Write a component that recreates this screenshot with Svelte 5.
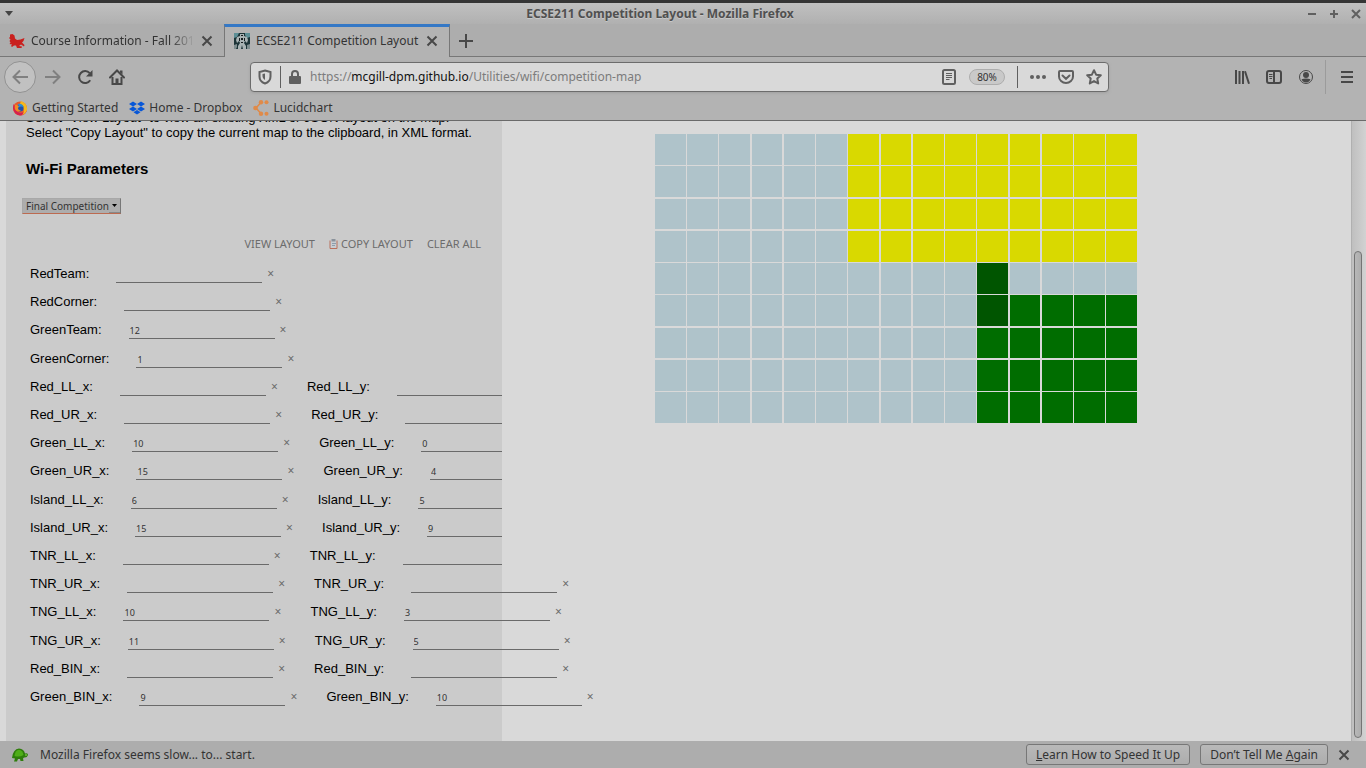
<script>
  const singles = [
    ['RedTeam', ''],
    ['RedCorner', ''],
    ['GreenTeam', '12'],
    ['GreenCorner', '1']
  ];
  const pairs = [
    ['Red_LL', '', ''],
    ['Red_UR', '', ''],
    ['Green_LL', '10', '0'],
    ['Green_UR', '15', '4'],
    ['Island_LL', '6', '5'],
    ['Island_UR', '15', '9'],
    ['TNR_LL', '', ''],
    ['TNR_UR', '', ''],
    ['TNG_LL', '10', '3'],
    ['TNG_UR', '11', '5'],
    ['Red_BIN', '', ''],
    ['Green_BIN', '9', '10']
  ];
  const rows = $state([
    ...singles.map(([name, value]) => ({ clip: true, fields: [{ name, value }] })),
    ...pairs.map(([name, x, y], i) => ({
      clip: i < 7,
      fields: [
        { name: name + '_x', value: x },
        { name: name + '_y', value: y }
      ]
    }))
  ]);

  function kind(col, row) {
    if (col >= 6 && row < 4) return 'island';
    if (col === 10 && (row === 4 || row === 5)) return 'tunnel';
    if (col >= 10 && row >= 5) return 'green';
    return 'water';
  }
  const cells = Array.from({ length: 135 }, (_, i) => kind(i % 15, Math.floor(i / 15)));

  function clearAll() {
    for (const row of rows) for (const field of row.fields) field.value = '';
  }
</script>

<div class="window">
  <header class="titlebar">
    <button class="wm" aria-label="Window menu"><svg width="8" height="5"><path d="M0 0h8L4 5z" fill="#444" stroke="none" /></svg></button>
    <h1>ECSE211 Competition Layout - Mozilla Firefox</h1>
    <div class="wmgroup">
      <button class="wm" aria-label="Minimise"><svg width="10" height="10"><path d="M1 5h8" /></svg></button>
      <button class="wm" aria-label="Maximise"><svg width="10" height="10"><path d="M1 5h8M5 1v8" /></svg></button>
      <button class="wm" aria-label="Close window"><svg width="10" height="10"><path d="M1 1l8 8M9 1l-8 8" /></svg></button>
    </div>
  </header>

  <nav class="tabs" aria-label="Tabs">
    <div class="tab first">
      <svg width="16" height="16" viewBox="0 0 16 16"><path fill="#c9201e" d="M1 1.500L3.500 1l2 1.500.5 3L8 7l3.500-.5L15.500 5l-1 3-1.500 1.500 2.500 2.500-.5 1.500-3-2-2 1.500 3 .5-.5 1.500H8L7 12.500H5L3 14l-1-1 1-1.500L.5 11l1-1.500L.5 8l1-1.500L0 5l1-1z" /></svg>
      <span class="label fade">Course Information - Fall 2019</span>
      <button class="close" aria-label="Close tab"><svg width="12" height="12"><path d="M1.500 1.500l9 9M10.500 1.500l-9 9" /></svg></button>
    </div>
    <div class="tab active">
      <svg width="16" height="16" viewBox="0 0 16 16"><path fill="#1d3438" d="M0 0h16v16H0z" /><path fill="#5d8f96" d="M0 0h5L3 4 0 5zM11 0h5v4l-3 1-2-3z" /><path fill="#7f8e90" d="M0 12l3-1v3l-1 2H0zM16 11l-3 1v4h3z" /><path fill="#a9b3b4" d="M6 1h4v2l3 1 1 3-1 3-2-2-1 2 2 3v3h-3l-1-4-1 4H4v-3l2-3-1-2-2 2-1-3 1-3 3-1z" /><path fill="#161d1f" d="M7 2h2v1H7zM5 5h1v3H5zM10 5h1v3h-1zM7 5h2v2H7zM7 9h2v1H7z" /></svg>
      <span class="label">ECSE211 Competition Layout</span>
      <button class="close" aria-label="Close tab"><svg width="12" height="12"><path d="M1.500 1.500l9 9M10.500 1.500l-9 9" /></svg></button>
    </div>
    <button class="newtab" aria-label="New tab"><svg width="14" height="14"><path d="M7 0v14M0 7h14" /></svg></button>
  </nav>

  <div class="toolbar">
    <button class="tool back" aria-label="Back"><svg width="16" height="16"><path d="M1 8h15M8 1.500L1.500 8 8 14.500" /></svg></button>
    <button class="tool dim" aria-label="Forward"><svg width="16" height="16"><path d="M0 8h15M8 1.500L14.500 8 8 14.500" /></svg></button>
    <button class="tool" aria-label="Reload"><svg width="16" height="16"><path d="M13.200 11.300A6 6 0 1 1 12.700 4.200" /><path class="solid" d="M15.500 1v6.500H9z" /></svg></button>
    <button class="tool" aria-label="Home"><svg width="16" height="16"><path d="M1 8.500L8 1.500l7 7" stroke-linecap="round" /><path d="M3.500 8v7h9V8" /><path class="solid" d="M6.500 9.500h3V15h-3zM11 1.500h2.500v4L11 3.500z" /></svg></button>
    <span class="spring"></span>
    <div class="urlbar">
      <svg width="16" height="16"><path d="M8 1.500l5.500 1.500v4.500c0 3.500-2.500 6-5.500 7-3-1-5.500-3.500-5.500-7V3z" /><path d="M8 4.500v6.500C6.500 10 5.500 8.700 5.500 7V5z" class="solid" /></svg>
      <span class="rule"></span>
      <svg width="14" height="16"><path class="solid" d="M2 7h10a1 1 0 0 1 1 1v6a1 1 0 0 1-1 1H2a1 1 0 0 1-1-1V8a1 1 0 0 1 1-1z" /><path d="M4 7.500V5a3 3 0 0 1 6 0v2.500" /></svg>
      <div class="url" role="textbox" tabindex="0" aria-label="Address" contenteditable="true" spellcheck="false">https://<b>mcgill-dpm.github.io</b>/Utilities/wifi/competition-map</div>
      <button class="in" aria-label="Reader view"><svg width="16" height="16"><rect x="2" y="1" width="12" height="14" rx="1.500" /><path class="thin" d="M5 4.500h6M5 6.500h6M5 8.500h6M5 10.500h3.500" /></svg></button>
      <button class="zoom">80%</button>
      <span class="rule"></span>
      <button class="in" aria-label="Page actions"><svg width="16" height="16"><circle class="solid" cx="2" cy="8" r="2" /><circle class="solid" cx="8" cy="8" r="2" /><circle class="solid" cx="14" cy="8" r="2" /></svg></button>
      <button class="in" aria-label="Save to Pocket"><svg width="16" height="16"><path d="M2 2h12q1 0 1 1v4.500a7 6.500 0 0 1-14 0V3q0-1 1-1z" /><path d="M4.500 6.500L8 9.800l3.500-3.300" stroke-linecap="round" /></svg></button>
      <button class="in" aria-label="Bookmark"><svg width="16" height="16"><path d="M8 1.200l2.100 4.500 4.700.6-3.500 3.300.9 4.900L8 12.100l-4.200 2.400.9-4.900L1.200 6.300l4.700-.6z" stroke-linejoin="round" /></svg></button>
    </div>
    <span class="spring"></span>
    <button class="tool" aria-label="Library"><svg width="16" height="16"><path d="M2 1v14M5.500 2v13M9 2v13M11 2.200l4 12.600" /></svg></button>
    <button class="tool" aria-label="Sidebars"><svg width="16" height="16"><rect x="1" y="2" width="14" height="12" rx="2" /><path d="M8 2v12" /><path class="thin" d="M3 5.500h3.500M3 7.500h3.500M3.500 9.500H6" /></svg></button>
    <button class="tool" aria-label="Account"><svg width="16" height="16"><circle class="thin" cx="8" cy="8" r="6.500" /><circle class="solid" cx="8" cy="6" r="3" /><path class="solid" d="M3.500 10.200Q8 8.800 12.500 10.200 11 13.500 8 13.500T3.500 10.200z" /></svg></button>
    <span class="sep"></span>
    <button class="tool" aria-label="Menu"><svg width="16" height="16"><path d="M2 3h12M2 8h12M2 13h12" /></svg></button>
  </div>

  <nav class="bookmarks" aria-label="Bookmarks">
    <a href="#start"><svg width="16" height="16" viewBox="0 0 16 16"><circle cx="8" cy="8.500" r="7" fill="#e8582c" /><path fill="#d5214f" d="M1 8q1 7 7 7.500 5 0 7-5-4 3-8 2Q3 11 3 6L1.500 4z" /><path fill="#f5b91d" d="M9 1q6 2 6.200 8-1 5-5.200 6 3-3 1-7.500L8 4z" /><circle cx="8" cy="8" r="3.600" fill="#2452a8" /><path fill="#2b8fd6" d="M6 4q4-1 5.500 3Q9 6 7 7z" /><path fill="#f08b24" d="M3 5q2-1 4 1.500L6 8q0 2 3 2.500-3 2-5 0-2-2-1-5.500z" /></svg>Getting Started</a>
    <a href="#dropbox"><svg width="16" height="16" viewBox="0 0 16 16"><path fill="#0757d8" d="M4 1.500L8 4 4 6.500 0 4zM12 1.500L16 4l-4 2.500L8 4zM4 6.500L8 9l-4 2.500L0 9zM12 6.500L16 9l-4 2.500L8 9zM8 10l3.500 2.200L8 14.500l-3.500-2.300z" /></svg>Home - Dropbox</a>
    <a href="#lucid"><svg width="16" height="16" viewBox="0 0 16 16"><path d="M8 2.500L3 8l5 5.500" fill="none" stroke="#e08a48" stroke-width="1.500" /><g fill="#e08a48"><circle cx="2.500" cy="8" r="2.300" /><circle cx="8" cy="2.300" r="2.200" /><circle cx="13.500" cy="2.300" r="2" /><circle cx="8" cy="13.700" r="2.200" /><circle cx="13.500" cy="13.700" r="2" /></g></svg>Lucidchart</a>
  </nav>

  <main>
    <section class="panel">
      <p>Select "View Layout" to view an existing XML or JSON layout on the map.<br />Select "Copy Layout" to copy the current map to the clipboard, in XML format.</p>
      <h2>Wi-Fi Parameters</h2>
      <div class="pick">
        <select aria-label="Parameter set"><option>Final Competition</option><option>Beta Demo</option></select>
        <span class="arrow"><svg width="5" height="3"><path d="M0 0h5L2.500 3z" /></svg></span>
      </div>
      <div class="actions">
        <button>VIEW LAYOUT</button>
        <button><svg width="9" height="10"><path d="M1 1.500v8h7v-8" fill="#c9cdd2" stroke="#b9705c" /><path d="M2.500 0h4v2.500h-4z" fill="#8a929b" stroke="none" /><path d="M3 4.500h4M3 6.500h3" stroke="#8c9dac" /></svg>COPY LAYOUT</button>
        <button onclick={clearAll}>CLEAR ALL</button>
      </div>
      <div class="rows">
        {#each rows as row}
          <div class="row" class:clip={row.clip}>
            {#each row.fields as field}
              <div class="field">
                <label for={field.name}>{field.name}:</label>
                <input id={field.name} type="text" bind:value={field.value} />
                <button aria-label="Clear {field.name}" onclick={() => (field.value = '')}>×</button>
              </div>
            {/each}
          </div>
        {/each}
      </div>
    </section>
    <section class="map" aria-label="Competition map">
      <div class="grid">
        {#each cells as cell}<div class={cell}></div>{/each}
      </div>
    </section>
    <div class="track"><div class="thumb"></div></div>
  </main>

  <footer>
    <svg width="16" height="16" viewBox="0 0 16 16"><path fill="#2f7d0b" d="M0 11q1-9 7-9.500 5 .5 6 5 3-1 3 1.500-1 3-4 2.500l-1 1 .5 2.500h-3l-.5-2H6L5 14.500H2l1-3z" /><path fill="#4fae18" d="M2.500 9Q3 3 7 2.700 10.500 3 11.500 8q-4 2.500-9 1z" /><circle cx="14" cy="8" r="1" fill="#6fbf3a" /></svg>
    <span>Mozilla Firefox seems slow... to... start.</span>
    <button class="answer"><u>L</u>earn How to Speed It Up</button>
    <button class="answer">Don’t Tell Me <u>A</u>gain</button>
    <button class="close" aria-label="Dismiss"><svg width="12" height="12"><path d="M1.500 1.500l9 9M10.500 1.500l-9 9" /></svg></button>
  </footer>
</div>

<style>
  :global(body) { margin: 0; }
  * { box-sizing: border-box; }
  .window {
    height: 100vh;
    display: flex;
    flex-direction: column;
    overflow: hidden;
    background: #d9d9d9;
    color: #333;
    font: 12px/16px "Noto Sans", sans-serif;
  }
  button { font: inherit; color: inherit; border: 0; background: none; padding: 0; }
  svg { display: block; flex: none; fill: none; stroke: #484848; stroke-width: 2; }
  svg .solid, .arrow path { fill: #484848; stroke: none; }
  svg .thin { stroke-width: 1; }

  .titlebar {
    flex: none;
    height: 24px;
    display: flex;
    align-items: center;
    padding: 0 5px;
    border-top: 3px solid #353535;
    background: linear-gradient(#c0c0c0, #b0b0b0);
  }
  .titlebar h1 { flex: 1; margin: 0; text-align: center; font-size: 12px; color: #505050; text-shadow: 0 1px #c8c8c8; }
  .wm svg { stroke: #606060; }
  .wmgroup { display: flex; gap: 12px; }

  .tabs {
    flex: none;
    height: 33px;
    display: flex;
    background: #adadad;
    box-shadow: inset 0 -1px #777;
  }
  .tab { width: 224px; display: flex; align-items: center; padding: 0 11px 0 9px; gap: 6px; }
  .tab > svg, .bookmarks svg, footer > svg { stroke: none; }
  .tab.active { width: 226px; background: #b3b3b3; border: 1px solid #777; border-top: 3px solid #3478c6; border-bottom: 0; padding-bottom: 2px; }
  .label { flex: 1; white-space: nowrap; overflow: hidden; }
  .fade { mask-image: linear-gradient(to right, #000 85%, transparent 100%); }
  .newtab { padding: 0 9px; }

  .toolbar {
    flex: none;
    height: 40px;
    display: flex;
    align-items: center;
    padding: 0 3px 0 4px;
    background: #b3b3b3;
  }
  .tool { width: 32px; height: 32px; display: grid; place-items: center; }
  .back { border: 1px solid #929292; border-radius: 50%; background: #c1c1c1; margin-right: 1px; }
  .back svg, .dim svg { stroke: #808080; }
  .spring { flex: 0 1 117px; }
  .sep { width: 1px; height: 34px; background: #9b9b9b; margin: 0 5px 0 3px; }
  .urlbar {
    flex: 1;
    height: 30px;
    display: flex;
    align-items: center;
    gap: 7px;
    padding: 0 6px;
    background: #d9d9d9;
    border: 1px solid #6c6c6c;
    border-radius: 4px;
    box-shadow: 0 1px 3px #a0a0a0;
  }
  .urlbar svg { stroke: #606060; }
  .urlbar .solid { fill: #606060; }
  .rule { width: 1px; height: 22px; background: #606060; }
  .url { flex: 1; padding-left: 1px; color: #7c7c7c; white-space: nowrap; outline: 0; }
  .url b { font-weight: 400; color: #111; }
  .zoom { width: 36px; height: 16px; margin: 0 5px; border: 1px solid #adadad; border-radius: 8px; background: #c9c9c9; font-size: 10px; line-height: 14px; }
  .in + .in { margin-left: 5px; }
  .rule + .in { margin-left: 5px; }

  .bookmarks {
    flex: none;
    height: 24px;
    display: flex;
    gap: 11px;
    padding: 0 12px 2px;
    background: #b3b3b3;
    border-bottom: 1px solid #6a6a6a;
  }
  .bookmarks a { display: flex; align-items: center; gap: 4px; color: #333; text-decoration: none; }

  main { flex: 1; min-height: 0; display: flex; overflow: hidden; font-family: "Liberation Sans", sans-serif; color: #000; }
  .panel { width: 496px; flex: none; margin-left: 6px; display: flex; flex-direction: column; background: #cbcbcb; }
  p { margin: -11px 20px 0; font-size: 13px; line-height: 15px; white-space: nowrap; }
  h2 { margin: 20px 20px 0; font-size: 15px; line-height: 18px; }
  .pick { display: flex; width: 99px; height: 16px; margin: 20px 16px 0; background: #adadad; border: 1px solid #a8a8a8; border-right-color: #777; border-bottom-color: #bc6a50; }
  select { width: 86px; appearance: none; border: 0; background: none; color: #333; padding: 0 0 0 3px; font: 10px/14px "Noto Sans", sans-serif; }
  .arrow { flex: 1; display: grid; place-items: center; border-bottom: 1px solid #888; }
  .arrow path { fill: #000; }
  .actions { display: flex; justify-content: flex-end; gap: 14px; margin-top: 22px; padding-right: 21px; font: 11px/16px "Noto Sans", sans-serif; color: #6c6c6c; }
  .actions button { display: flex; align-items: center; gap: 3px; white-space: nowrap; }
  .actions svg { stroke-width: 1; }

  .rows { flex: 1; display: flex; flex-direction: column; padding: 8px 0 30px; }
  .row { flex: 1; display: flex; align-items: center; gap: 29px; padding-left: 24px; }
  .row.clip { overflow: hidden; }
  .field { display: flex; flex: none; align-items: center; font-size: 13px; line-height: 16px; }
  .field input { width: 146px; height: 18px; margin-left: 27px; padding: 2px 1px 0; border: 0; border-bottom: 1px solid #6a6a6a; background: none; outline: 0; border-radius: 0; font: 9px/12px "Noto Sans", sans-serif; color: #333; }
  .field button { width: 7px; margin-left: 5px; font: 12px/16px "Noto Sans", sans-serif; color: #6c6c6c; }

  .map { flex: 1; min-width: 0; padding: 13px 0 0 153px; }
  .grid { width: 482px; height: 289px; display: grid; grid-template: repeat(9, 1fr) / repeat(15, 1fr); gap: 0.5% 0.35%; }
  .water { background: #afc3ca; }
  .island { background: #d9d900; }
  .green { background: #006d00; }
  .tunnel { background: #005500; }
  .track { width: 15px; padding: 130px 4px 3px 2px; display: flex; background: linear-gradient(to right, #bfbfbf, #d2d2d2); border-left: 1px solid #b0b0b0; }
  .thumb { flex: 1; border: 1px solid #747474; border-radius: 5px; background: linear-gradient(to right, #b8b8b8, #adadad); }

  footer { flex: none; height: 27px; display: flex; align-items: center; gap: 10px; padding: 0 16px 0 12px; background: #adadad; }
  footer span { flex: 1; padding-left: 2px; }
  .answer { height: 21px; padding: 0 9px; border: 1px solid #777; border-radius: 3px; background: linear-gradient(#b9b9b9, #adadad); }
</style>
